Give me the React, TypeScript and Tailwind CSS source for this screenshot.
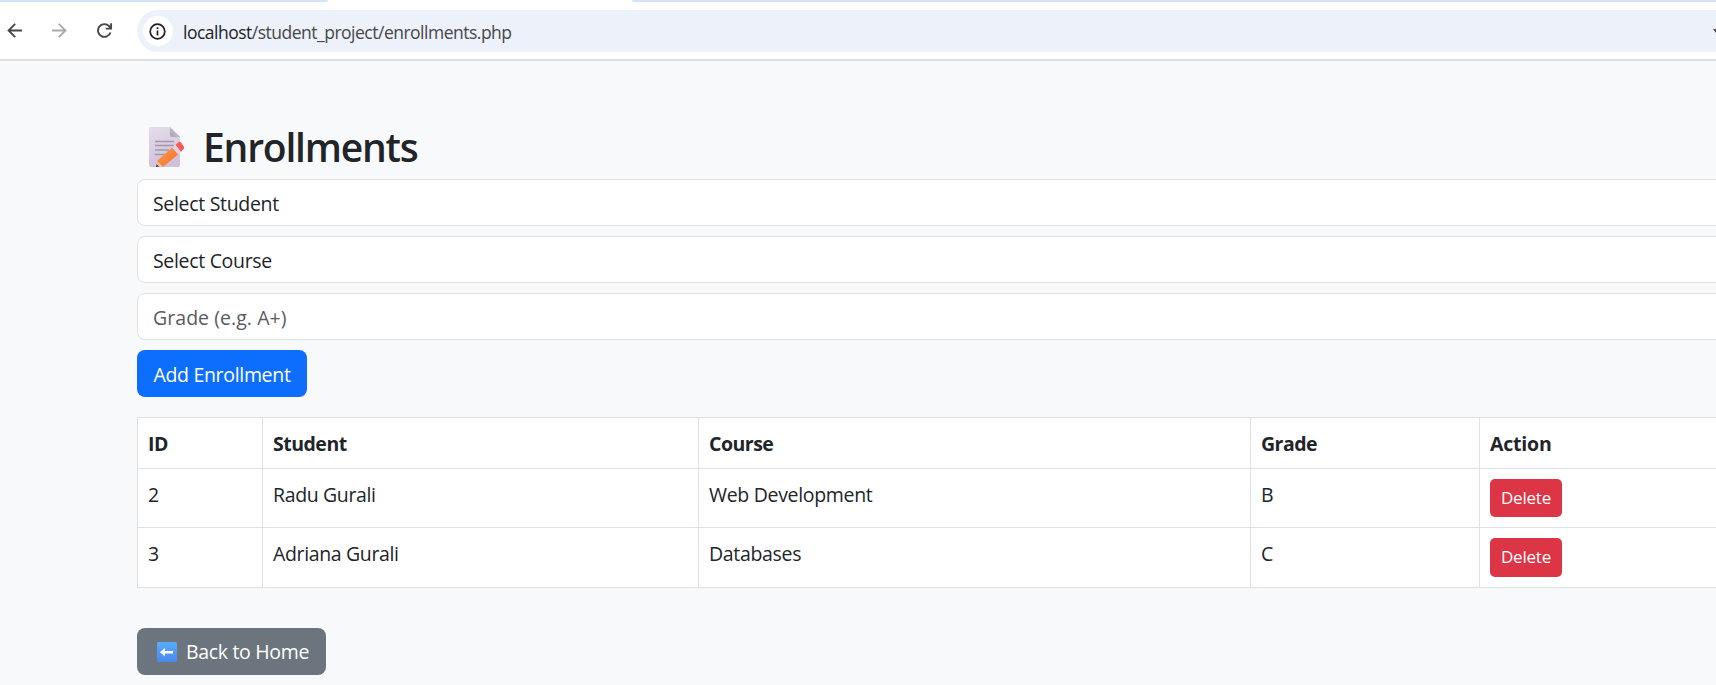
import React from "react";

const rows = [
  { id: "2", student: "Radu Gurali", course: "Web Development", grade: "B", height: "h-[59px]", button: "h-[38px]" },
  { id: "3", student: "Adriana Gurali", course: "Databases", grade: "C", height: "h-[60px]", button: "h-[39px]" },
];

function BrowserBar() {
  return (
    <header className="h-[61px] shrink-0 border-b-2 border-[#dfe1df] bg-white">
      <div className="flex h-[2px] justify-between">
        <div className="w-[328px] rounded-br-[8px] bg-[#d3e3fd]" />
        <div className="w-[1084px] rounded-bl-[8px] bg-[#d3e3fd]" />
      </div>
      <div className="mt-2 flex h-[42px] items-center">
        <svg className="ml-[7px] h-[16px] w-[16px] shrink-0" viewBox="0 0 16 16" fill="none" stroke="#474747" strokeWidth="1.8">
          <path d="M15 7.5H1.6M8.2 0.8 1.5 7.5l6.7 6.7" />
        </svg>
        <svg className="ml-[29px] h-[16px] w-[16px] shrink-0" viewBox="0 0 16 16" fill="none" stroke="#a9a9a9" strokeWidth="1.8">
          <path d="M0 7.5H13.4M6.8 0.8 13.5 7.5l-6.7 6.7" />
        </svg>
        <svg className="ml-[29px] h-[16px] w-[16px] shrink-0" viewBox="0 0 16 16" fill="none" stroke="#474747" strokeWidth="1.9">
          <path d="M13.5 9.5A6.4 6.4 0 1 1 12 3L14 5M14.1 0.2V5.6H8.7" />
        </svg>
        <div className="ml-[24px] flex h-[42px] grow items-center rounded-l-full bg-[#ecf1fa] pl-[6px]">
          <div className="flex h-[30px] w-[30px] items-center justify-center rounded-full bg-white">
            <svg className="mr-px h-[17px] w-[17px]" viewBox="0 0 17 17" fill="none" stroke="#1f1f1f" strokeWidth="1.7">
              <circle cx="8.5" cy="8.5" r="7.3" />
              <path d="M8.5 7.5v5M8.5 4.3v1.8" />
            </svg>
          </div>
          <span className="ml-[10px] pt-px text-[17.5px] tracking-[-0.5px] text-[#474747]">
            <span className="text-[#1f1f1f]">localhost</span>/student_project/enrollments.php
          </span>
          <svg className="ml-auto h-[4px] w-[3px]" viewBox="0 0 3 4">
            <path d="M0 0H3V4Z" fill="#474747" />
          </svg>
        </div>
      </div>
    </header>
  );
}

function MemoIcon() {
  return (
    <svg className="h-[40px] w-[36px]" viewBox="0 0 36 40">
      <defs>
        <linearGradient id="page" x1="0" y1="0" x2="0.3" y2="1">
          <stop offset="0" stopColor="#e6ddeb" />
          <stop offset="1" stopColor="#cfc1da" />
        </linearGradient>
        <linearGradient id="fold" x1="0" y1="1" x2="1" y2="0">
          <stop offset="0" stopColor="#aaa0b2" />
          <stop offset="1" stopColor="#d6cedb" />
        </linearGradient>
        <linearGradient id="pencil" x1="0" y1="0" x2="1" y2="1">
          <stop offset="0" stopColor="#ff9a40" />
          <stop offset="1" stopColor="#f26f34" />
        </linearGradient>
      </defs>
      <path d="M2 0H21L31 10V38a2 2 0 0 1-2 2H2a2 2 0 0 1-2-2V2A2 2 0 0 1 2 0Z" fill="url(#page)" />
      <path d="M21 0 31 10H23a2 2 0 0 1-2-2Z" fill="url(#fold)" />
      <path d="M6 14.5H25M6 18.5H25M6 23H20M6 27.5H16" stroke="#a198aa" strokeWidth="1.3" />
      <path d="M7 40 8 34 14 39.6Z" fill="#eac0a5" />
      <path d="M7 40 7.5 37.2 10.2 39.4Z" fill="#4d2a40" />
      <path d="M8 34 23.5 20.2 29.5 27.2 14 39.8Z" fill="url(#pencil)" />
      <path d="M23 20.6 26.5 17.6 32.2 24.8 29.2 27.4Z" fill="#ddd3e6" />
      <path d="M26.5 17.8 30 15Q31 14.4 32 15.5L34.8 19.4Q35.6 20.5 34.8 21.7L32 24.8Z" fill="#fb5a55" />
    </svg>
  );
}

function BackIcon() {
  return (
    <svg className="h-[20px] w-[20px]" viewBox="0 0 20 20">
      <defs>
        <linearGradient id="tile" x1="0" y1="0" x2="0" y2="1">
          <stop offset="0" stopColor="#58aefb" />
          <stop offset="1" stopColor="#4b87ec" />
        </linearGradient>
      </defs>
      <rect width="20" height="20" rx="1.5" fill="url(#tile)" />
      <path d="M3 10.2 7.8 6V9H16V11.5H7.8V14.5Z" fill="#fff" />
    </svg>
  );
}

const field = "h-[47px] w-full rounded-[8px] border border-[#dee2e6] bg-white px-[15px] pt-[9px]";
const cell = "border border-[#dee2e6] px-[10px] text-left align-top";

export default function App() {
  return (
    <div className="flex h-[685px] w-[1716px] flex-col overflow-hidden bg-[#f8f9fb] font-['Open_Sans','Noto_Sans',sans-serif] text-[19.5px] leading-[30px] tracking-[-0.32px] text-[#212529]">
      <BrowserBar />
      <main className="flex flex-col items-start pl-[137px]">
        <h1 className="mt-[62px] flex h-[48px] items-center pl-[12px] text-[39px] leading-[48px] font-semibold">
          <MemoIcon />
          <span className="ml-[18px] tracking-[-1.2px]">Enrollments</span>
        </h1>
        <form className="mt-2 flex w-[1640px] flex-col items-start gap-[10px]">
          <div className={field}>Select Student</div>
          <div className={field}>Select Course</div>
          <div className={`${field} tracking-[0.05px] text-[#595c5f]`}>Grade (e.g. A+)</div>
          <button type="button" className="h-[47px] w-[170px] rounded-[8px] bg-[#0d6efd] pt-[2px] text-white">Add Enrollment</button>
        </form>
        <table className="mt-[20px] w-[1640px] table-fixed border-collapse bg-white">
          <colgroup>
            <col className="w-[125px]" />
            <col className="w-[436px]" />
            <col className="w-[552px]" />
            <col className="w-[229px]" />
            <col />
          </colgroup>
          <thead>
            <tr className="h-[51px] font-bold tracking-[-0.5px]">
              <th className={`${cell} pt-[11px]`}>ID</th>
              <th className={`${cell} pt-[11px]`}>Student</th>
              <th className={`${cell} pt-[11px]`}>Course</th>
              <th className={`${cell} pt-[11px]`}>Grade</th>
              <th className={`${cell} pt-[11px] tracking-[-0.2px]`}>Action</th>
            </tr>
          </thead>
          <tbody>
            {rows.map((r) => (
              <tr key={r.id} className={r.height}>
                <td className={`${cell} pt-[11px]`}>{r.id}</td>
                <td className={`${cell} pt-[11px] tracking-[-0.36px]`}>{r.student}</td>
                <td className={`${cell} pt-[11px]`}>{r.course}</td>
                <td className={`${cell} pt-[11px]`}>{r.grade}</td>
                <td className={`${cell} pt-[10px]`}>
                  <button type="button" className={`${r.button} block w-[72px] rounded-[5px] bg-[#dc3545] pb-px text-[17px] tracking-[-0.2px] text-white`}>Delete</button>
                </td>
              </tr>
            ))}
          </tbody>
        </table>
        <a className="mt-[40px] flex h-[47px] w-[189px] items-center rounded-[8px] bg-[#6c757d] pl-[20px] text-white">
          <BackIcon />
          <span className="ml-[9px] pt-px">Back to Home</span>
        </a>
      </main>
    </div>
  );
}
